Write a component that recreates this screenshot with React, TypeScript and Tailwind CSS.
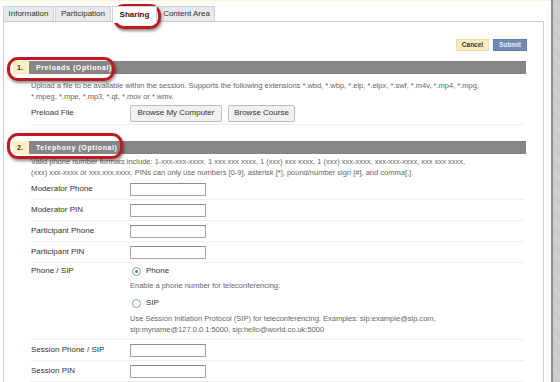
import React from "react";

const tabs = [
  { label: "Information", w: "w-[51px]" },
  { label: "Participation", w: "w-[56px]" },
  { label: "Sharing", w: "w-[45px]", active: true },
  { label: "Content Area", w: "w-[57px]" },
];

function SectionHeader({ num, title }: { num: string; title: string }) {
  return (
    <div className="flex h-[13px] ml-[9px] mr-[17px]">
      <div className="w-[16px] bg-[#fcefc2] text-[7px] font-bold text-[#333] leading-[13px] pl-[4px]">{num}</div>
      <div className="flex-1 bg-[#868686] text-[7px] font-bold text-white leading-[13px] pl-[7px] tracking-[0.6px]">{title}</div>
    </div>
  );
}

function Callout({ className }: { className: string }) {
  return (
    <div
      className={
        "absolute border-[3px] border-[#be1a22] rounded-[11px] shadow-[1px_2px_3px_rgba(0,0,0,0.45)] pointer-events-none " +
        className
      }
    />
  );
}

function Input() {
  return <div className="w-[76px] h-[13px] border border-[#a5a5a5] border-t-[#8c8c8c] bg-white" />;
}

function Row({ label, children }: { label: string; children?: React.ReactNode }) {
  return (
    <div className="flex items-center h-[21px] border-b border-[#efefef] ml-[27px] mr-[19px]">
      <div className="w-[99px] text-[8px] text-[#333]">{label}</div>
      {children}
    </div>
  );
}

function Radio({ checked }: { checked?: boolean }) {
  return (
    <div className="w-[9px] h-[9px] rounded-full border border-[#7f99bd] bg-white flex items-center justify-center">
      {checked && <div className="w-[3px] h-[3px] rounded-full bg-[#3c9b3c]" />}
    </div>
  );
}

export default function App() {
  return (
    <div className="relative flex w-[560px] h-[382px] overflow-hidden bg-white font-['Liberation_Sans',Arial,sans-serif]">
      <div className="w-[551px] flex flex-col">
        <div className="h-[3px] bg-[#fdf2d2]" />

        {/* Tabs */}
        <div className="flex gap-[1px] pl-[3px] pt-[5px] h-[21px]">
          {tabs.map((t) => (
            <div
              key={t.label}
              className={
                t.w +
                " h-[16px] flex items-center justify-center text-[8px] border border-[#cfd2d6] " +
                (t.active
                  ? "bg-white border-b-white font-bold text-[#222] h-[17px] relative z-10"
                  : "bg-[#e7e9ec] text-[#333]")
              }
            >
              {t.label}
            </div>
          ))}
        </div>

        {/* Panel */}
        <div className="ml-[3px] w-[541px] flex-1 border-l border-t border-r border-[#cdcdcd] -mt-[1px]">
          <div className="flex justify-end gap-[4px] pt-[17px] pr-[16px]">
            <div className="w-[33px] h-[12px] bg-[#fbecbe] border border-[#efdca6] text-[6.5px] font-bold text-[#333] flex items-center justify-center">
              Cancel
            </div>
            <div className="w-[34px] h-[12px] bg-[#7088b2] border border-[#6179a3] text-[6.5px] font-bold text-[#e8edf6] flex items-center justify-center">
              Submit
            </div>
          </div>

          <div className="mt-[10px]">
            <SectionHeader num="1." title="Preloads (Optional)" />
          </div>
          <div className="mt-[6px] ml-[27px] mr-[19px] text-[7.5px] leading-[11px] text-[#666]">
            Upload a file to be available within the session. Supports the following extensions *.wbd, *.wbp, *.elp, *.elpx, *.swf, *.m4v, *.mp4, *.mpg,
            <br />
            *.mpeg, *.mpe, *.mp3, *.qt, *.mov or *.wmv.
          </div>
          <div className="flex items-center h-[23px] border-b border-[#efefef] ml-[27px] mr-[19px]">
            <div className="w-[99px] text-[8px] text-[#333]">Preload File</div>
            <div className="flex gap-[6px]">
              <div className="w-[92px] h-[17px] bg-[#f1f1f1] border border-[#bdbdbd] rounded-[2px] text-[8px] text-[#333] flex items-center justify-center">
                Browse My Computer
              </div>
              <div className="w-[67px] h-[17px] bg-[#f1f1f1] border border-[#bdbdbd] rounded-[2px] text-[8px] text-[#333] flex items-center justify-center">
                Browse Course
              </div>
            </div>
          </div>

          <div className="mt-[16px]">
            <SectionHeader num="2." title="Telephony (Optional)" />
          </div>
          <div className="mt-[2px] ml-[27px] mr-[19px] text-[7.5px] leading-[11px] text-[#666]">
            Valid phone number formats include: 1-xxx-xxx-xxxx, 1 xxx xxx xxxx, 1 (xxx) xxx xxxx, 1 (xxx) xxx-xxxx, xxx-xxx-xxxx, xxx xxx xxxx,
            <br />
            (xxx) xxx-xxxx or xxx.xxx.xxxx. PINs can only use numbers [0-9], asterisk [*], pound/number sign [#], and comma[,].
          </div>
          <div className="mt-[1px]">
            <Row label="Moderator Phone"><Input /></Row>
            <Row label="Moderator PIN"><Input /></Row>
            <Row label="Participant Phone"><Input /></Row>
            <Row label="Participant PIN"><Input /></Row>
            <div className="flex h-[77px] border-b border-[#efefef] ml-[27px] mr-[19px] pt-[2px]">
              <div className="w-[99px] text-[8px] text-[#333]">Phone / SIP</div>
              <div className="flex flex-col">
                <div className="flex items-center gap-[5px] pl-[2px] text-[8px] text-[#333]">
                  <Radio checked />
                  Phone
                </div>
                <div className="mt-[3px] text-[7.5px] leading-[11px] text-[#666]">Enable a phone number for teleconferencing.</div>
                <div className="mt-[6px] flex items-center gap-[5px] pl-[2px] text-[8px] text-[#333]">
                  <Radio />
                  SIP
                </div>
                <div className="mt-[4px] text-[7.5px] leading-[11px] text-[#666]">
                  Use Session Initiation Protocol (SIP) for teleconferencing. Examples: sip:example@sip.com,
                  <br />
                  sip:myname@127.0.0.1:5000, sip:hello@world.co.uk:5000
                </div>
              </div>
            </div>
            <Row label="Session Phone / SIP"><Input /></Row>
            <Row label="Session PIN"><Input /></Row>
          </div>
        </div>
      </div>

      {/* scrollbar strip */}
      <div className="w-[9px] flex">
        <div className="w-[2px] bg-[#8e8e8e]" />
        <div className="flex-1 bg-[repeating-linear-gradient(45deg,#c6c6c6_0px,#c6c6c6_1px,#d4d4d4_1px,#d4d4d4_2px)]" />
      </div>

      <Callout className="left-[113px] top-[4px] w-[48px] h-[25px]" />
      <Callout className="left-[7px] top-[57px] w-[108px] h-[24px]" />
      <Callout className="left-[7px] top-[133px] w-[116px] h-[26px]" />
    </div>
  );
}
